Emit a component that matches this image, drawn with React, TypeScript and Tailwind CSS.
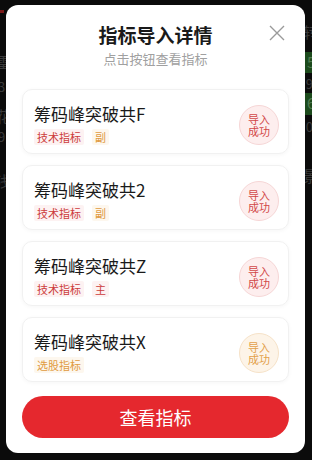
import React from 'react';

type Tag = { label: string; tone: 'red' | 'orange' };

interface IndicatorItem {
    name: string;
    tags: Tag[];
    tone: 'red' | 'orange';
}

const items: IndicatorItem[] = [
    { name: '筹码峰突破共F', tags: [{ label: '技术指标', tone: 'red' }, { label: '副', tone: 'orange' }], tone: 'red' },
    { name: '筹码峰突破共2', tags: [{ label: '技术指标', tone: 'red' }, { label: '副', tone: 'orange' }], tone: 'red' },
    { name: '筹码峰突破共Z', tags: [{ label: '技术指标', tone: 'red' }, { label: '主', tone: 'red' }], tone: 'red' },
    { name: '筹码峰突破共X', tags: [{ label: '选股指标', tone: 'orange' }], tone: 'orange' },
];

const font = { fontFamily: '"Noto Sans CJK SC", "Noto Sans", sans-serif' };

const TagChip: React.FC<{ tag: Tag }> = ({ tag }) => (
    <span
        className={
            tag.tone === 'red'
                ? 'px-[3px] h-[16px] leading-[16px] text-[11px] rounded-[2px] bg-[#fdf2f2] text-[#cc3b3b]'
                : 'px-[3px] h-[16px] leading-[16px] text-[11px] rounded-[2px] bg-[#fdf7ee] text-[#e09a3e]'
        }
    >
        {tag.label}
    </span>
);

const StatusBadge: React.FC<{ tone: 'red' | 'orange' }> = ({ tone }) => (
    <div
        className={
            tone === 'red'
                ? 'w-[40px] h-[40px] rounded-full border border-[#f6d6d6] bg-[#fdeeee] text-[#d24848] flex items-center justify-center text-center text-[11px] leading-[12px]'
                : 'w-[40px] h-[40px] rounded-full border border-[#f6e2c8] bg-[#fdf4e8] text-[#e3a04a] flex items-center justify-center text-center text-[11px] leading-[12px]'
        }
    >
        <span>
            导入
            <br />
            成功
        </span>
    </div>
);

// page behind the dimmed overlay, only its edges show
const Backdrop: React.FC = () => (
    <div className="absolute inset-0 flex justify-between text-[#3a3a3a] text-[15px] leading-[20px]" style={font}>
        <div className="flex flex-col ml-[-4px] pt-[10px]">
            <div className="ml-[4px] w-[4px] h-[3px] bg-[#7a1a1a]" />
            <span className="mt-[39px]">雷</span>
            <span className="ml-[2px] text-[13px] leading-[18px] mt-[6px]">3</span>
            <span className="mt-[10px]">花</span>
            <span className="ml-[2px] text-[13px] leading-[18px] mt-[2px]">9</span>
            <span className="mt-[25px]">浅</span>
        </div>
        <div className="flex flex-col items-end mr-[-6px] pt-[22px]">
            <span>转</span>
            <div className="mt-[10px] w-[16px] h-[21px] bg-[#1c4a1c] text-[#4f7a4f] pl-[5px]">5</div>
            <span className="mr-[5px] text-[13px] leading-[18px] mt-[2px]">9</span>
            <div className="w-[16px] h-[22px] bg-[#1c4a1c] text-[#4f7a4f] pl-[5px]">6</div>
            <span className="mr-[5px] text-[13px] leading-[18px] mt-[3px]">0</span>
            <span className="mt-[30px]">景</span>
        </div>
    </div>
);

export default function App() {
    return (
        <div className="relative w-[312px] h-[460px] bg-[#0b0b0b] overflow-hidden pt-[5px] pl-[6px]" style={font}>
            <Backdrop />
            <div className="relative w-[299px] h-[448px] bg-white rounded-[12px] px-[16px] pt-[17px] pb-[15px] flex flex-col">
                <button className="absolute right-[19px] top-[19px] w-[18px] h-[18px] flex items-center justify-center">
                    <svg width="16" height="16" viewBox="0 0 16 16" fill="none" stroke="#9a9a9a" strokeWidth="1.4">
                        <path d="M1 1 L15 15 M15 1 L1 15" />
                    </svg>
                </button>
                <h2 className="text-center text-[19px] leading-[26px] font-semibold text-[#1a1a1a]">指标导入详情</h2>
                <p className="mt-[2px] text-center text-[13px] leading-[17px] text-[#a0a0a0]">点击按钮查看指标</p>

                <div className="mt-[22px] flex flex-col gap-[11px]">
                    {items.map(item => (
                        <div
                            key={item.name}
                            className="h-[65px] rounded-[10px] border border-[#f1f1f1] shadow-[0_1px_4px_rgba(0,0,0,0.04)] pl-[11px] pr-[9px] flex items-center justify-between"
                        >
                            <div className="flex flex-col gap-[4px] pt-[3px]">
                                <span className="text-[17px] leading-[23px] text-[#1a1a1a]">{item.name}</span>
                                <div className="flex gap-[8px]">
                                    {item.tags.map(tag => (
                                        <TagChip key={tag.label} tag={tag} />
                                    ))}
                                </div>
                            </div>
                            <div className="pt-[7px]">
                                <StatusBadge tone={item.tone} />
                            </div>
                        </div>
                    ))}
                </div>

                <button className="mt-auto h-[42px] w-full rounded-full bg-[#e5282e] text-white text-[18px]">
                    查看指标
                </button>
            </div>
        </div>
    );
}
